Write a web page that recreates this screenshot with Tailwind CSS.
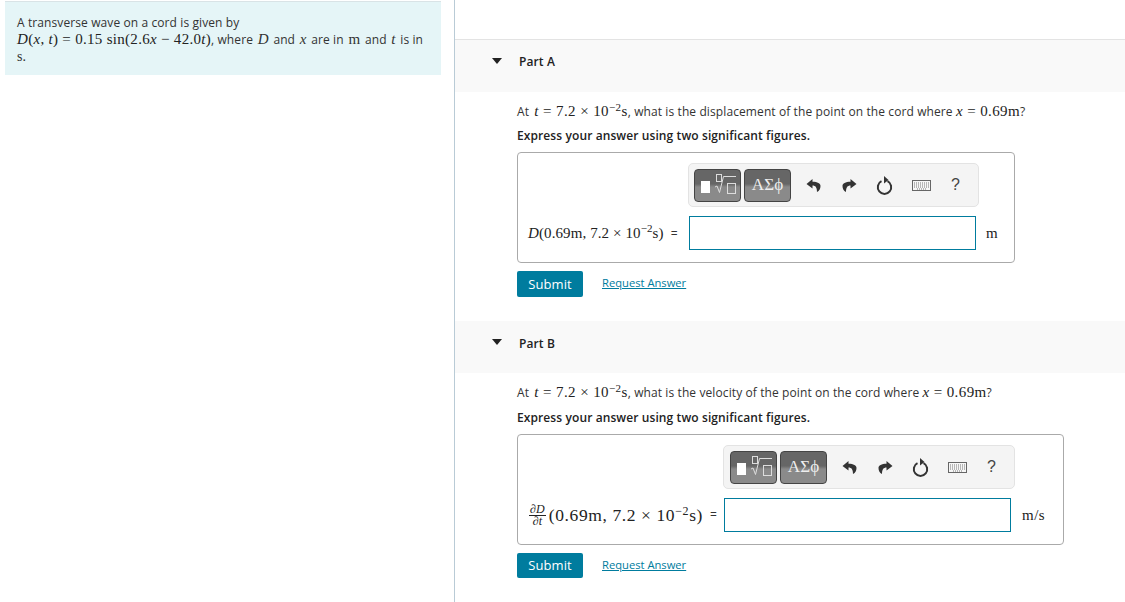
<!DOCTYPE html>
<html><head><meta charset="utf-8"><script src="https://cdn.jsdelivr.net/npm/@tailwindcss/browser@4"></script></head>
<body class="bg-white overflow-hidden">
<div class="flex w-[1125px] h-[602px] overflow-hidden font-['Open_Sans',sans-serif] text-[12px] text-[#333] tracking-[0.1px]">
<aside class="w-[455px] h-full border-r border-[#b9cbd6] shrink-0 pl-[5px] pt-[1px]">
<div class="w-[436px] h-[74px] bg-[#e5f5f7] border-t border-[#d9e3e6] pl-[12px] pt-[13px] leading-[16px]">
<div>A transverse wave on a cord is given by</div>
<div class="whitespace-nowrap"><span class="font-['Liberation_Serif',serif] text-[15px] text-[#222] tracking-[0.3px]"><i>D</i>(<i>x</i>, <i>t</i>) = 0.15 sin(2.6<i>x</i> − 42.0<i>t</i>)</span>, where <i class="mx-[1.500px] font-['Liberation_Serif',serif] text-[15px]">D</i> and <i class="mx-[1.500px] font-['Liberation_Serif',serif] text-[15px]">x</i> are in <span class="mx-[1.500px] font-['Liberation_Serif',serif] text-[15px]">m</span> and <i class="mx-[1.500px] font-['Liberation_Serif',serif] text-[15px]">t</i> is in</div>
<div class="font-['Liberation_Serif',serif] text-[14px] mt-[1px]">s.</div>
</div>
</aside>
<main class="flex-1 pt-[39px]">
<section>
<div class="h-[53px] bg-[#f9f9f9] border-t border-[#e3e3e3] flex items-start pt-[14px] relative">
<svg class="ml-[37px] mt-[4px]" width="10" height="6" viewBox="0 0 10 6"><path d="M0 0H10L5 6Z" fill="#222"/></svg>
<span class="ml-[17px] text-[#222] font-semibold leading-[16px]">Part A</span>
</div>
<div class="ml-[62px]">
<div class="mt-[9px] h-[20px] leading-[20px] whitespace-nowrap">At <span class="ml-[2px] font-['Liberation_Serif',serif] text-[15px] text-[#222] tracking-[0.4px]"><i>t</i> = 7.2 × 10<sup class="text-[11px] leading-[0]">−2</sup>s</span>, what is the displacement of the point on the cord where <span class="font-['Liberation_Serif',serif] text-[15px] text-[#222] tracking-[0.4px]"><i>x</i> = 0.69m</span>?</div>
<div class="mt-[5px] h-[20px] leading-[20px] text-[#222] font-semibold">Express your answer using two significant figures.</div>
<div class="mt-[6px] w-[498px] h-[111px] border border-[#aaa] rounded-[4px] pl-[10px] pt-[10px]">
<div class="ml-[160px] w-[291px] h-[44px] bg-[#f4f4f4] border border-[#e3e3e3] rounded-[5px] flex items-center pl-[5px] text-[#333]">
<div class="w-[47px] h-[33px] rounded-[4px] border border-[#444] bg-[linear-gradient(#666_45%,#8a8a8a_55%)]">
<svg width="45" height="31" viewBox="0 0 45 31" fill="none" stroke="#ddd"><rect x="6" y="11" width="9" height="12" fill="#fff" stroke="none"/><rect x="21.500" y="4.500" width="5" height="7"/><path d="M20 17l2-1 2.500 6.500L28.500 6.500H41"/><rect x="32.500" y="13.500" width="8" height="10"/></svg>
</div>
<div class="ml-[3px] w-[47px] h-[33px] rounded-[4px] border border-[#444] bg-[linear-gradient(#666_45%,#8a8a8a_55%)] flex items-center justify-center font-['Liberation_Serif',serif] text-[17px] text-[#eee]">ΑΣϕ</div>
<svg class="ml-[15px]" width="15" height="15" viewBox="0 0 15 15"><path d="M6.500 1 .5 6 6.500 10.500V7.500C9.500 7.500 11 9.500 11 14 13.500 13 14.500 10 14.500 8 14.500 5.500 11.500 3.800 6.500 3.800Z" fill="#333"/></svg>
<svg class="ml-[21px]" width="15" height="15" viewBox="0 0 15 15"><path d="M8.500 1 14.500 6 8.500 10.500V7.500C5.500 7.500 4 9.500 4 14 1.500 13 .5 10 .5 8 .5 5.500 3.500 3.800 8.500 3.800Z" fill="#333"/></svg>
<svg class="ml-[19px]" width="17" height="19" viewBox="0 0 17 19" fill="none"><path d="M5.500 5.200A6.700 6.700 0 1 0 11.500 5.200" stroke="#333" stroke-width="2"/><path d="M8 0 12.500 4 8 7.500Z" fill="#333"/></svg>
<svg class="ml-[19px]" width="19" height="11" viewBox="0 0 19 11"><rect x=".5" y=".5" width="18" height="10" fill="#f6f6f6" stroke="#666"/><path d="M2 3H17M2 5H17M2 7H17M5 9H14" stroke="#777" stroke-dasharray="1 1"/></svg>
<span class="ml-[20px] font-['Liberation_Sans',sans-serif] text-[16px] text-[#444]">?</span>
</div>
<div class="flex items-center mt-[9px]">
<div class="w-[161px] whitespace-nowrap"><span class="font-['Liberation_Serif',serif] text-[15px] text-[#222]"><i>D</i>(0.69m, 7.2 × 10<sup class="text-[11px] leading-[0]">−2</sup>s)</span><span class="ml-[7px]">=</span></div>
<div class="w-[287px] h-[34px] border border-[#007c9e]"></div>
<span class="ml-[10px] font-['Liberation_Serif',serif] text-[15px] text-[#222]">m</span>
</div>
</div>
<div class="mt-[8px] flex items-start">
<button class="w-[66px] h-[26px] pt-[1px] rounded-[2px] bg-[#007c9e] text-white text-[13px]">Submit</button>
<a class="ml-[19px] mt-[3px] leading-[18px] text-[#007c9e] underline text-[11.200px] font-medium tracking-[0px]">Request Answer</a>
</div>
</div>
</section>
<section class="mt-[24px]">
<div class="h-[52px] bg-[#f9f9f9] flex items-start pt-[15px]">
<svg class="ml-[37px] mt-[3px]" width="10" height="6" viewBox="0 0 10 6"><path d="M0 0H10L5 6Z" fill="#222"/></svg>
<span class="ml-[17px] text-[#222] font-semibold leading-[16px]">Part B</span>
</div>
<div class="ml-[62px]">
<div class="mt-[9px] h-[20px] leading-[20px] whitespace-nowrap">At <span class="ml-[2px] font-['Liberation_Serif',serif] text-[15px] text-[#222] tracking-[0.4px]"><i>t</i> = 7.2 × 10<sup class="text-[11px] leading-[0]">−2</sup>s</span>, what is the velocity of the point on the cord where <span class="font-['Liberation_Serif',serif] text-[15px] text-[#222] tracking-[0.4px]"><i>x</i> = 0.69m</span>?</div>
<div class="mt-[6px] h-[20px] leading-[20px] text-[#222] font-semibold">Express your answer using two significant figures.</div>
<div class="mt-[6px] w-[547px] h-[111px] border border-[#aaa] rounded-[4px] pl-[10px] pt-[10px]">
<div class="ml-[195px] w-[292px] h-[44px] bg-[#f4f4f4] border border-[#e3e3e3] rounded-[5px] flex items-center pl-[6px] text-[#333]">
<div class="w-[47px] h-[33px] rounded-[4px] border border-[#444] bg-[linear-gradient(#666_45%,#8a8a8a_55%)]">
<svg width="45" height="31" viewBox="0 0 45 31" fill="none" stroke="#ddd"><rect x="6" y="11" width="9" height="12" fill="#fff" stroke="none"/><rect x="21.500" y="4.500" width="5" height="7"/><path d="M20 17l2-1 2.500 6.500L28.500 6.500H41"/><rect x="32.500" y="13.500" width="8" height="10"/></svg>
</div>
<div class="ml-[3px] w-[47px] h-[33px] rounded-[4px] border border-[#444] bg-[linear-gradient(#666_45%,#8a8a8a_55%)] flex items-center justify-center font-['Liberation_Serif',serif] text-[17px] text-[#eee]">ΑΣϕ</div>
<svg class="ml-[15px]" width="15" height="15" viewBox="0 0 15 15"><path d="M6.500 1 .5 6 6.500 10.500V7.500C9.500 7.500 11 9.500 11 14 13.500 13 14.500 10 14.500 8 14.500 5.500 11.500 3.800 6.500 3.800Z" fill="#333"/></svg>
<svg class="ml-[21px]" width="15" height="15" viewBox="0 0 15 15"><path d="M8.500 1 14.500 6 8.500 10.500V7.500C5.500 7.500 4 9.500 4 14 1.500 13 .5 10 .5 8 .5 5.500 3.500 3.800 8.500 3.800Z" fill="#333"/></svg>
<svg class="ml-[19px]" width="17" height="19" viewBox="0 0 17 19" fill="none"><path d="M5.500 5.200A6.700 6.700 0 1 0 11.500 5.200" stroke="#333" stroke-width="2"/><path d="M8 0 12.500 4 8 7.500Z" fill="#333"/></svg>
<svg class="ml-[19px]" width="19" height="11" viewBox="0 0 19 11"><rect x=".5" y=".5" width="18" height="10" fill="#f6f6f6" stroke="#666"/><path d="M2 3H17M2 5H17M2 7H17M5 9H14" stroke="#777" stroke-dasharray="1 1"/></svg>
<span class="ml-[20px] font-['Liberation_Sans',sans-serif] text-[16px] text-[#444]">?</span>
</div>
<div class="flex items-center mt-[9px]">
<div class="w-[196px] whitespace-nowrap flex items-center"><span class="inline-flex flex-col items-center ml-[1px] font-['Liberation_Serif',serif] italic text-[12px] leading-[11px] text-[#222]"><span class="border-b border-[#222] px-[1px]">∂D</span><span>∂t</span></span><span class="ml-[3px] font-['Liberation_Serif',serif] text-[17.500px] text-[#222] tracking-[0.6px]">(0.69m, 7.2 × 10<sup class="text-[12px] leading-[0]">−2</sup>s)</span><span class="ml-[7px]">=</span></div>
<div class="w-[287px] h-[34px] border border-[#007c9e]"></div>
<span class="ml-[11px] font-['Liberation_Serif',serif] text-[15px] text-[#222] tracking-[0.5px]">m/s</span>
</div>
</div>
<div class="mt-[8px] flex items-start">
<button class="w-[66px] h-[25px] pt-[1px] rounded-[2px] bg-[#007c9e] text-white text-[13px]">Submit</button>
<a class="ml-[19px] mt-[3px] leading-[18px] text-[#007c9e] underline text-[11.200px] font-medium tracking-[0px]">Request Answer</a>
</div>
</div>
</section>
</main>
</div>
</body></html>
